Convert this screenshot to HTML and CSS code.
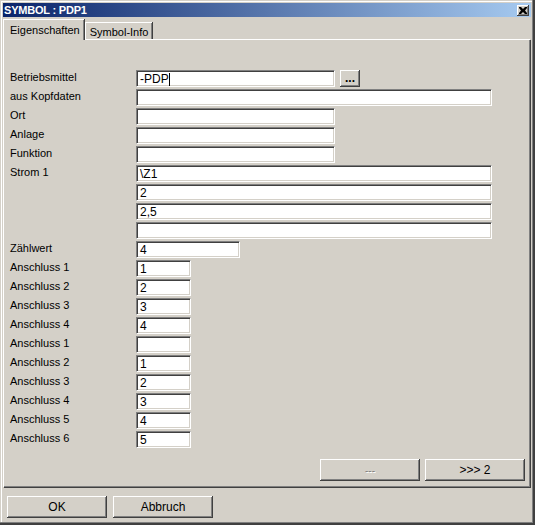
FILE: index.html
```html
<!DOCTYPE html>
<html>
<head>
<meta charset="utf-8">
<link rel="stylesheet" href="styles.css">
</head>
<body>
<div class="window">
  <div class="titlebar">
    <span class="title">SYMBOL : PDP1</span>
    <span class="close"><svg width="8" height="7" viewBox="0 0 8 7"><path d="M0 0h2l2 2 2-2h2v1L6 3.5 8 6v1H6L4 5 2 7H0V6l2-2.5L0 1z" fill="#000"/></svg></span>
  </div>
  <div class="tabs">
    <div class="tab active">Eigenschaften</div>
    <div class="tab">Symbol-Info</div>
  </div>
  <div class="panel">
    <div class="form">
      <div class="label">Betriebsmittel</div>
      <div class="cell"><div class="field w-md">-PDP<span class="caret"></span></div><div class="btn dots">...</div></div>
      <div class="label">aus Kopfdaten</div>
      <div class="cell"><div class="field w-lg"></div></div>
      <div class="label">Ort</div>
      <div class="cell"><div class="field w-md"></div></div>
      <div class="label">Anlage</div>
      <div class="cell"><div class="field w-md"></div></div>
      <div class="label">Funktion</div>
      <div class="cell"><div class="field w-md"></div></div>
      <div class="label">Strom 1</div>
      <div class="cell"><div class="field w-lg">\Z1</div></div>
      <div class="label"></div>
      <div class="cell"><div class="field w-lg">2</div></div>
      <div class="label"></div>
      <div class="cell"><div class="field w-lg">2,5</div></div>
      <div class="label"></div>
      <div class="cell"><div class="field w-lg"></div></div>
      <div class="label">Zählwert</div>
      <div class="cell"><div class="field w-sm">4</div></div>
      <div class="label">Anschluss 1</div>
      <div class="cell"><div class="field w-xs">1</div></div>
      <div class="label">Anschluss 2</div>
      <div class="cell"><div class="field w-xs">2</div></div>
      <div class="label">Anschluss 3</div>
      <div class="cell"><div class="field w-xs">3</div></div>
      <div class="label">Anschluss 4</div>
      <div class="cell"><div class="field w-xs">4</div></div>
      <div class="label">Anschluss 1</div>
      <div class="cell"><div class="field w-xs"></div></div>
      <div class="label">Anschluss 2</div>
      <div class="cell"><div class="field w-xs">1</div></div>
      <div class="label">Anschluss 3</div>
      <div class="cell"><div class="field w-xs">2</div></div>
      <div class="label">Anschluss 4</div>
      <div class="cell"><div class="field w-xs">3</div></div>
      <div class="label">Anschluss 5</div>
      <div class="cell"><div class="field w-xs">4</div></div>
      <div class="label">Anschluss 6</div>
      <div class="cell"><div class="field w-xs">5</div></div>
    </div>
    <div class="nav">
      <div class="btn wide disabled">---</div>
      <div class="btn wide">&gt;&gt;&gt; 2</div>
    </div>
  </div>
  <div class="footer">
    <div class="btn wide">OK</div>
    <div class="btn wide">Abbruch</div>
  </div>
</div>
</body>
</html>
```
FILE: styles.css
```css
* { box-sizing: border-box; }
html, body { margin: 0; padding: 0; background: #d4d0c8; }
body { font-family: "Liberation Sans", Arial, sans-serif; font-size: 11px; color: #000; }

.window {
  width: 535px;
  height: 525px;
  background: #d4d0c8;
  padding: 3px 4px 3px 3px;
  display: flex;
  flex-direction: column;
  box-shadow: inset -2px -2px #404040, inset -3px -3px #808080, inset 1px 1px #d4d0c8, inset 2px 2px #fff;
}

.titlebar {
  height: 14px;
  background: linear-gradient(to right, #0a246a, #a6caf0);
  display: flex;
  align-items: center;
  justify-content: space-between;
  padding: 0 2px 0 1px;
}
.title {
  color: #fff;
  font-weight: bold;
  font-size: 11px;
  letter-spacing: -0.2px;
}
.close {
  width: 12px;
  height: 11px;
  background: #d4d0c8;
  display: flex;
  align-items: center;
  justify-content: center;
  box-shadow: inset -1px -1px #404040, inset 1px 1px #fff, inset -2px -2px #808080;
}

.tabs {
  height: 22px;
  display: flex;
  align-items: flex-end;
  position: relative;
  z-index: 1;
}
.tab {
  height: 17px;
  padding: 2px 4px 0 4px;
  border-top: 1px solid #fff;
  border-left: 1px solid #fff;
  box-shadow: inset -1px 0 #808080, 1px 0 #404040;
  background: #d4d0c8;
  margin-left: 1px;
  line-height: 14px;
  white-space: nowrap;
}
.tab.active {
  height: 21px;
  margin-left: 0;
  margin-bottom: -1px;
  padding: 3px 4px 0 6px;
  font-size: 11px;
}

.panel {
  height: 448px;
  border-top: 1px solid #fff;
  border-left: 1px solid #fff;
  box-shadow: inset -1px -1px #808080, 1px 1px #404040;
  margin-right: 1px;
  padding: 30px 6px 6px 6px;
  display: flex;
  flex-direction: column;
}

.form {
  display: grid;
  grid-template-columns: 126px auto;
  grid-auto-rows: 17px;
  row-gap: 2px;
}
.label {
  line-height: 15px;
  white-space: nowrap;
}
.cell {
  display: flex;
  gap: 5px;
}

.field {
  height: 17px;
  background: #fff;
  border-top: 1px solid #808080;
  border-left: 1px solid #808080;
  border-right: 1px solid #fff;
  border-bottom: 1px solid #fff;
  box-shadow: inset 1px 1px #404040, inset -1px -1px #d4d0c8;
  padding: 2px 0 0 3px;
  line-height: 13px;
  font-size: 12px;
  white-space: nowrap;
}
.w-lg { width: 356px; }
.w-md { width: 199px; }
.w-sm { width: 104px; }
.w-xs { width: 55px; }

.caret {
  display: inline-block;
  width: 1px;
  height: 13px;
  background: #000;
  vertical-align: top;
}

.btn {
  background: #d4d0c8;
  box-shadow: inset -1px -1px #404040, inset 1px 1px #fff, inset -2px -2px #808080;
  display: flex;
  align-items: center;
  justify-content: center;
  font-size: 12px;
}
.dots {
  width: 20px;
  height: 17px;
  font-weight: bold;
  font-size: 12px;
  padding-bottom: 2px;
}
.wide {
  width: 100px;
  height: 22px;
}
.disabled {
  color: #808080;
  text-shadow: 1px 1px #fff;
  font-size: 10px;
}

.nav {
  margin-top: auto;
  display: flex;
  justify-content: flex-end;
  gap: 5px;
  margin-right: -1px;
}

.footer {
  margin-top: 9px;
  padding-left: 4px;
  display: flex;
  gap: 6px;
}
```
